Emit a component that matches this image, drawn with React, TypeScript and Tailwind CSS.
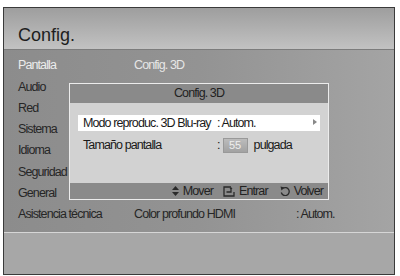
import React from "react";

const F = { fontFamily: '"Liberation Sans", Arial, sans-serif' };

function UpDown() {
  return (
    <svg width="7" height="10" viewBox="0 0 7 10" className="mr-[4px]">
      <path d="M3.5 0 L7 4 L0 4 Z" fill="#2a2a2a" />
      <path d="M3.5 10 L7 6 L0 6 Z" fill="#2a2a2a" />
    </svg>
  );
}
function EnterIcon() {
  return (
    <svg width="12" height="11" viewBox="0 0 12 11" className="mr-[4px]">
      <path d="M8 1 H1 V10 H11 V6" fill="none" stroke="#2a2a2a" strokeWidth="1.3" />
      <path d="M3.5 6 H8 V3" fill="none" stroke="#2a2a2a" strokeWidth="1.3" />
      <path d="M6.5 3 L8 1 L9.5 3 Z" fill="#2a2a2a" />
    </svg>
  );
}
function BackIcon() {
  return (
    <svg width="10" height="10" viewBox="0 0 10 10" className="mr-[4px]">
      <path d="M3 2.2 A4 4 0 1 1 1.3 6.5" fill="none" stroke="#2a2a2a" strokeWidth="1.3" />
      <path d="M0.5 0.5 L4.5 1.5 L1.5 4.5 Z" fill="#2a2a2a" />
    </svg>
  );
}

const rows: [string, React.ReactNode][] = [
  ["Pantalla", <span className="text-[#e6e6e6]">Config. 3D</span>],
  ["Audio", null],
  ["Red", null],
  ["Sistema", null],
  ["Idioma", null],
  ["Seguridad", null],
  ["General", null],
  [
    "Asistencia técnica",
    <>
      <span className="w-[162px]">Color profundo HDMI</span>
      <span>: Autom.</span>
    </>,
  ],
];

export default function App() {
  return (
    <div className="w-[400px] h-[276px] bg-white pt-[7px] pl-[3px] tracking-[-0.9px]" style={F}>
      <div className="relative w-[392px] h-[268px] border border-[#3a3a3a] flex flex-col">
        <div className="h-[41px] bg-gradient-to-b from-[#9e9e9e] to-[#c2c2c2] flex items-end pl-[14px] pb-[5px] tracking-normal">
          <span className="text-[18px] leading-none text-[#1e1e1e]">Config.</span>
        </div>
        <div className="h-[183px] bg-gradient-to-r from-[#8c8c8c] via-[#939393] to-[#a4a4a4] border-t border-[#7c7c7c] pt-[5px] flex flex-col">
          {rows.map(([m, right], i) => (
            <div key={m} className="h-[21.3px] flex items-center text-[12.5px] text-[#262626]">
              <span className={"w-[130px] pl-[14px] " + (i === 0 ? "text-[#ececec]" : "")}>{m}</span>
              <div className="flex-1 flex items-center">{right}</div>
            </div>
          ))}
        </div>
        <div className="flex-1 bg-[#a7a7a7] border-t border-[#d6d6d6]" />

        <div className="absolute left-[65px] top-[75px] w-[260px] h-[117px] border border-[#ececec] flex flex-col bg-[#d2d2d2]">
          <div className="h-[19px] bg-[#8a8a8a] flex items-center justify-center text-[12.5px] text-[#222]">Config. 3D</div>
          <div className="flex-1 pt-[12px] px-[8px] flex flex-col">
            <div className="h-[16px] bg-white flex items-center pl-[5px] text-[12.5px] text-[#1a1a1a] relative">
              <span className="w-[134px] whitespace-nowrap">Modo reproduc. 3D Blu-ray</span>
              <span>: Autom.</span>
              <span className="absolute right-[3px] top-[4px] w-0 h-0 border-y-[3px] border-y-transparent border-l-[4px] border-l-[#888]" />
            </div>
            <div className="h-[28px] flex items-center pl-[5px] text-[12.5px] text-[#1a1a1a]">
              <span className="w-[134px]">Tamaño pantalla</span>
              <span>:</span>
              <span className="ml-[3px] w-[25px] h-[15px] bg-gradient-to-b from-[#bcbcbc] to-[#a2a2a2] border border-[#999] text-[#eeeeee] text-[11px] flex items-center justify-center tracking-normal">55</span>
              <span className="ml-[6px]">pulgada</span>
            </div>
          </div>
          <div className="h-[16px] bg-[#8a8a8a] flex items-center justify-end pr-[5px] text-[12.5px] text-[#222]">
            <UpDown />
            <span className="mr-[10px]">Mover</span>
            <EnterIcon />
            <span className="mr-[12px]">Entrar</span>
            <BackIcon />
            <span>Volver</span>
          </div>
        </div>
      </div>
    </div>
  );
}
